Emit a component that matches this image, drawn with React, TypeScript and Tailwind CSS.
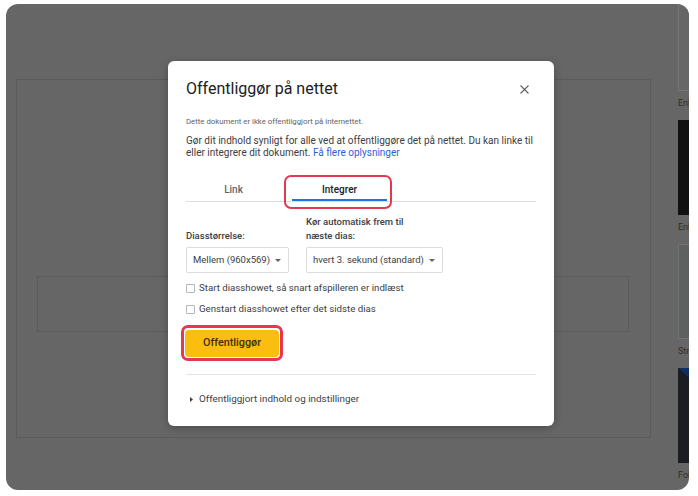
import React from "react";

const themes = [
  { name: "Enkel lys", thumb: "border border-[#767676] bg-[#666666]" },
  { name: "Enkel mørk", thumb: "bg-[#111111]" },
  { name: "Streamline", thumb: "border border-[#727474] bg-[#5e6060]" },
  { name: "Fokus", thumb: "bg-[#15171b]" },
];

const Caret = () => (
  <svg width="6" height="3" viewBox="0 0 6 3" className="shrink-0">
    <path d="M0 0h6L3 3z" fill="#5f6368" />
  </svg>
);

const Checkbox: React.FC<{ label: string }> = ({ label }) => (
  <label className="flex h-[14px] items-center gap-[4px]">
    <span className="h-[9px] w-[9px] rounded-[1px] border border-[#b4b7bb] bg-white" />
    <span className="text-[9.7px] text-[#3c4043]">{label}</span>
  </label>
);

const App: React.FC = () => {
  return (
    <div className="relative flex h-[496px] w-[698px] bg-white pb-[6px] pl-[6px] pr-[9px] pt-[4px] font-['Roboto',sans-serif]">
      {/* Dimmed editor behind the dialog */}
      <div className="flex h-full flex-1 overflow-hidden rounded-[12px] bg-[#666666]">
        <div className="shrink-0 pl-[10px] pt-[75px]">
          <div className="h-[359px] w-[635px] border border-[#5b5b5b] pl-[20px] pt-[196px]">
            <div className="h-[56px] w-[592px] border border-[#5b5b5b]" />
          </div>
        </div>

        {/* Theme list */}
        <div className="-mt-[8px] ml-[27px] w-[170px] shrink-0">
          {themes.map((t, i) => (
            <div key={t.name} className="h-[124px]">
              <div className={`relative h-[95px] w-full overflow-hidden ${t.thumb}`}>
                {i === 3 && (
                  <svg width="170" height="95" className="absolute left-0 top-0">
                    <path d="M0 0h14L60 40v14z" fill="#10315f" />
                    <path d="M0 0L60 54v41H0z" fill="#1b1d22" />
                  </svg>
                )}
              </div>
              <div className="pt-[6px] text-[9px] leading-[12px] text-[#2e2e2e]">{t.name}</div>
            </div>
          ))}
        </div>
      </div>

      {/* Publish dialog */}
      <div className="absolute left-[168px] top-[61px] w-[386px] rounded-[6px] bg-white px-[18px] pb-[19px] pt-[18px] shadow-[0_2px_8px_rgba(0,0,0,0.25)]">
        <div className="flex h-[20px] items-center justify-between">
          <h2 className="text-[16px] leading-[20px] text-[#202124]">Offentliggør på nettet</h2>
          <svg width="9" height="9" viewBox="0 0 9 9" className="mr-[7px]">
            <path d="M0.5 0.5l8 8M8.5 0.5l-8 8" stroke="#5f6368" strokeWidth="1.1" />
          </svg>
        </div>

        <p className="mt-[18px] text-[7.8px] leading-[10px] text-[#5f6368]">
          Dette dokument er ikke offentliggjort på internettet.
        </p>
        <p className="mt-[8px] text-[10px] leading-[12px] text-[#3c4043]">
          Gør dit indhold synligt for alle ved at offentliggøre det på nettet. Du kan linke til eller integrere dit
          dokument. <span className="text-[#2b5fd9]">Få flere oplysninger</span>
        </p>

        {/* Tabs */}
        <div className="relative mt-[19px] flex h-[24px] gap-[11px] border-b border-[#dadce0]">
          <div className="flex w-[95px] items-center justify-center text-[10px] font-medium text-[#5f6368]">Link</div>
          <div className="flex w-[95px] items-center justify-center border-b-2 border-[#1a73e8] pt-[2px] text-[10px] font-medium text-[#202124]">
            Integrer
          </div>
          <div className="absolute left-[98px] top-[-3px] h-[34px] w-[108px] rounded-[7px] border-[2.5px] border-[#e3394f]" />
        </div>

        {/* Options */}
        <div className="mt-[13px] flex items-end gap-[17px]">
          <div className="flex flex-col">
            <span className="text-[9.5px] font-medium leading-[14px] text-[#3c4043]">Diasstørrelse:</span>
            <div className="mt-[4px] flex h-[26px] w-[103px] items-center justify-between rounded-[2px] border border-[#dadce0] pl-[6px] pr-[7px] text-[9.5px] text-[#3c4043]">
              Mellem (960x569)
              <Caret />
            </div>
          </div>
          <div className="flex flex-col">
            <span className="text-[9.5px] font-medium leading-[14px] text-[#3c4043]">
              Kør automatisk frem til
              <br />
              næste dias:
            </span>
            <div className="mt-[4px] flex h-[26px] w-[137px] items-center justify-between rounded-[2px] border border-[#dadce0] pl-[6px] pr-[7px] text-[9.5px] text-[#3c4043]">
              hvert 3. sekund (standard)
              <Caret />
            </div>
          </div>
        </div>

        <div className="mt-[8px] flex flex-col gap-[7px]">
          <Checkbox label="Start diasshowet, så snart afspilleren er indlæst" />
          <Checkbox label="Genstart diasshowet efter det sidste dias" />
        </div>

        <div className="-ml-[5px] mt-[9px] w-fit rounded-[7px] border-[3px] border-[#e3394f] p-px">
          <button className="h-[27px] w-[94px] rounded-[4px] bg-[#fbbd0f] text-[10.8px] font-medium text-[#3c2f00]">
            Offentliggør
          </button>
        </div>

        <div className="mt-[13px] h-px bg-[#e3e4e6]" />

        <div className="mt-[18px] flex h-[14px] items-center gap-[6px] pl-[4px]">
          <svg width="3" height="5" viewBox="0 0 3 5">
            <path d="M0 0l3 2.5L0 5z" fill="#3c4043" />
          </svg>
          <span className="text-[9.9px] text-[#3c4043]">Offentliggjort indhold og indstillinger</span>
        </div>
      </div>
    </div>
  );
};

export default App;
